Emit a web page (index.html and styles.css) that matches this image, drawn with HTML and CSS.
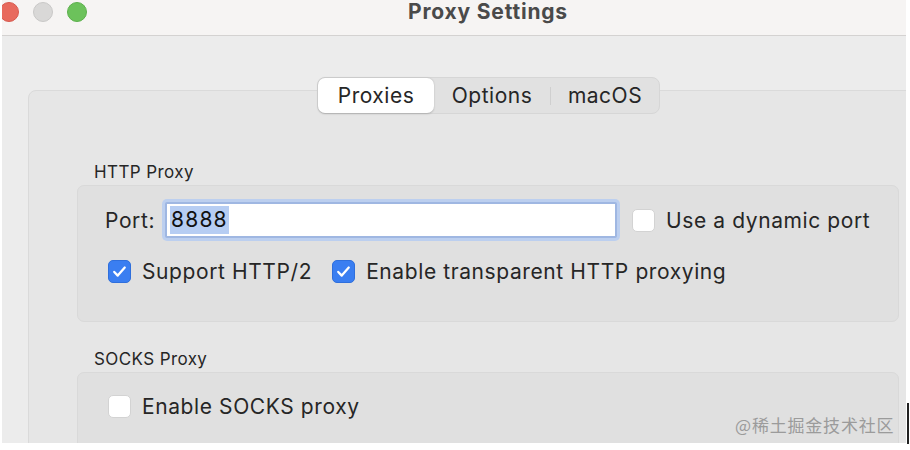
FILE: index.html
```html
<!DOCTYPE html>
<html>
<head>
<meta charset="utf-8">
<link rel="stylesheet" href="styles.css">
</head>
<body>
<div class="window">
  <div class="titlebar">
    <div class="lights">
      <span class="light red"></span>
      <span class="light gray"></span>
      <span class="light green"></span>
    </div>
    <div class="title">Proxy Settings</div>
  </div>
  <div class="content">
    <div class="tabs">
      <div class="tab active">Proxies</div>
      <div class="tab">Options</div>
      <div class="sep"></div>
      <div class="tab">macOS</div>
    </div>
    <div class="panel">
      <div class="group-label">HTTP Proxy</div>
      <div class="group">
        <div class="row port-row">
          <span class="field-label">Port:</span>
          <div class="input"><span class="sel">8888</span></div>
          <label class="check"><span class="box"></span><span>Use a dynamic port</span></label>
        </div>
        <div class="row opts-row">
          <label class="check"><span class="box on"><svg viewBox="0 0 24 24"><path d="M6 12.5l4 4.2L18 7.5" fill="none" stroke="#fff" stroke-width="2.6" stroke-linecap="round" stroke-linejoin="round"/></svg></span><span>Support HTTP/2</span></label>
          <label class="check"><span class="box on"><svg viewBox="0 0 24 24"><path d="M6 12.5l4 4.2L18 7.5" fill="none" stroke="#fff" stroke-width="2.6" stroke-linecap="round" stroke-linejoin="round"/></svg></span><span>Enable transparent HTTP proxying</span></label>
        </div>
      </div>
      <div class="group-label socks-label">SOCKS Proxy</div>
      <div class="group socks">
        <label class="check"><span class="box"></span><span>Enable SOCKS proxy</span></label>
      </div>
    </div>
  </div>
</div>
<div class="watermark">@稀土掘金技术社区</div>
<div class="cursor-line"></div>
</body>
</html>
```

FILE: styles.css
```css
html, body {
  margin: 0;
  padding: 0;
  background: #ffffff;
  width: 910px;
  height: 450px;
  overflow: hidden;
  font-family: "Inter", "Liberation Sans", sans-serif;
  color: #262626;
}

.window {
  margin-left: 2px;
  width: 904px;
  height: 443px;
  background: #ececec;
  overflow: hidden;
}

.titlebar {
  height: 35px;
  background: #f6f4f3;
  border-bottom: 1px solid #d4d2d1;
  display: flex;
  align-items: flex-start;
  position: relative;
}

.lights {
  display: flex;
  gap: 14px;
  margin-left: -3px;
  margin-top: 2px;
}

.light {
  width: 20px;
  height: 20px;
  border-radius: 50%;
  box-sizing: border-box;
}
.light.red { background: #e86a5e; border: 1px solid #d75a4f; }
.light.gray { background: #d9d8d7; border: 1px solid #c9c8c7; }
.light.green { background: #6cc25b; border: 1px solid #5cb04c; }

.title {
  position: absolute;
  left: 0;
  right: 0;
  top: 0;
  line-height: 24px;
  text-align: center;
  font-weight: 700;
  font-size: 21px;
  letter-spacing: 0.8px;
  color: #4a4a4a;
  padding-left: 68px;
}

.content {
  padding-top: 41px;
  display: flex;
  flex-direction: column;
}

.tabs {
  align-self: flex-start;
  margin-left: 315px;
  display: flex;
  align-items: center;
  height: 37px;
  box-sizing: border-box;
  background: #e1e1e1;
  border: 1px solid #d6d6d6;
  border-radius: 8px;
  position: relative;
  z-index: 1;
}

.tab {
  font-size: 21px;
  letter-spacing: 0.5px;
  height: 35px;
  line-height: 35px;
  width: 116px;
  text-align: center;
  color: #262626;
}
.tab:last-child { width: 108px; }

.tab.active {
  background: #ffffff;
  border-radius: 7px;
  box-shadow: 0 0.5px 2px rgba(0,0,0,0.2);
}

.sep {
  width: 1px;
  height: 18px;
  background: #cfcfcf;
}

.panel {
  margin-top: -24px;
  margin-left: 26px;
  width: 920px;
  height: 400px;
  background: #e6e6e6;
  border: 1px solid #dadada;
  border-radius: 8px;
  box-sizing: border-box;
  padding-top: 69px;
  padding-left: 48px;
}

.group-label {
  font-size: 17px;
  letter-spacing: 0.4px;
  margin-left: 17px;
  height: 24px;
  line-height: 24px;
}

.group {
  width: 822px;
  box-sizing: border-box;
  background: #e0e0e0;
  border: 1px solid #d9d9d9;
  border-radius: 7px;
  margin-top: 1px;
  padding: 16px 0 37px 27px;
}

.row {
  display: flex;
  align-items: center;
}

.field-label {
  font-size: 21px;
  letter-spacing: 0.6px;
  margin-right: 10px;
}

.input {
  width: 452px;
  height: 36px;
  box-sizing: border-box;
  background: #ffffff;
  border: 2px solid #9fb7e2;
  box-shadow: 0 0 0 3px #bccfef;
  border-radius: 2px;
  display: flex;
  align-items: center;
  padding-left: 3px;
  margin-right: 15px;
}

.sel {
  background: #b6cdf3;
  font-size: 21px;
  letter-spacing: 1.2px;
  color: #111;
  line-height: 28px;
  padding: 0 1px;
}

.check {
  display: flex;
  align-items: center;
  font-size: 21px;
  letter-spacing: 0.6px;
  gap: 11px;
}

.box {
  width: 23px;
  height: 23px;
  box-sizing: border-box;
  border-radius: 5px;
  background: #ffffff;
  border: 1px solid #d3d3d3;
  display: flex;
  align-items: center;
  justify-content: center;
}

.box.on {
  background: #3a7ef1;
  border-color: #2f6fdc;
}
.box svg { width: 21px; height: 21px; }

.opts-row {
  margin-top: 21px;
  padding-left: 3px;
  gap: 20px;
}

.socks-label {
  margin-top: 25px;
}

.group.socks {
  padding: 21px 0 40px 30px;
}

.watermark {
  position: absolute;
  left: 735px;
  top: 412px;
  font-family: "Noto Sans CJK SC", sans-serif;
  font-size: 17px;
  color: #9b9b9b;
  letter-spacing: 0.8px;
}

.cursor-line {
  position: absolute;
  left: 907px;
  top: 403px;
  width: 2px;
  height: 41px;
  background: #222;
}
```
